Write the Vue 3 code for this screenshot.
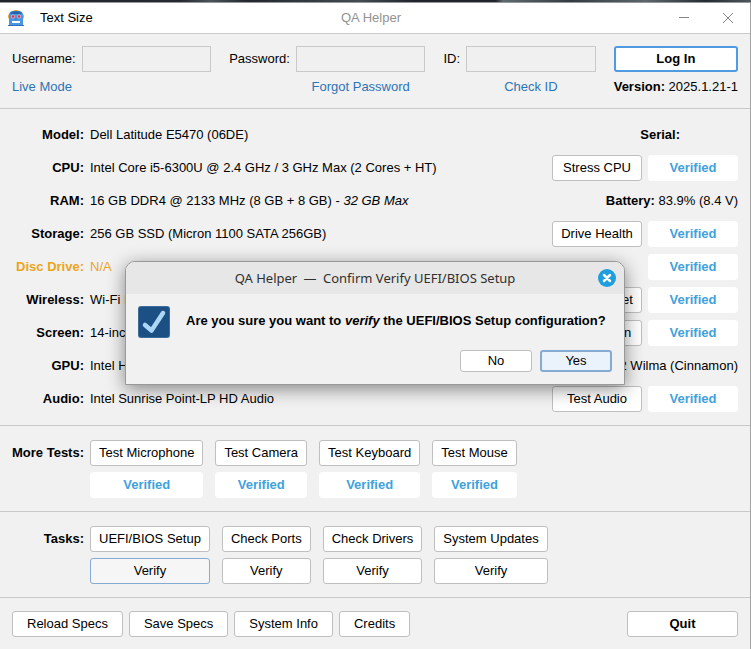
<script setup>
import { ref } from 'vue'

const username = ref('')
const password = ref('')
const deviceId = ref('')

const specs = [
  { label: 'Model', value: 'Dell Latitude E5470 (06DE)', infoLabel: 'Serial', serial: true },
  { label: 'CPU', value: 'Intel Core i5-6300U @ 2.4 GHz / 3 GHz Max (2 Cores + HT)', action: 'Stress CPU', verified: true },
  { label: 'RAM', value: '16 GB DDR4 @ 2133 MHz (8 GB + 8 GB) - ', note: '32 GB Max', infoLabel: 'Battery', info: '83.9% (8.4 V)' },
  { label: 'Storage', value: '256 GB SSD (Micron 1100 SATA 256GB)', action: 'Drive Health', verified: true },
  { label: 'Disc Drive', value: 'N/A', missing: true, verified: true },
  { label: 'Wireless', value: 'Wi-Fi Intel', action: 'Test Internet', verified: true },
  { label: 'Screen', value: '14-inch', action: 'Test Screen', verified: true },
  { label: 'GPU', value: 'Intel HD Graphics 520', infoLabel: 'OS', info: 'Linux Mint 22 Wilma (Cinnamon)' },
  { label: 'Audio', value: 'Intel Sunrise Point-LP HD Audio', action: 'Test Audio', verified: true }
]

const tests = ['Test Microphone', 'Test Camera', 'Test Keyboard', 'Test Mouse']
const tasks = ['UEFI/BIOS Setup', 'Check Ports', 'Check Drivers', 'System Updates']
const tools = ['Reload Specs', 'Save Specs', 'System Info', 'Credits']

const activeTask = ref('UEFI/BIOS Setup')
const dialogOpen = ref(true)

function verify(task) {
  activeTask.value = task
  dialogOpen.value = true
}
</script>

<template>
  <div class="desktop">
    <div class="window">
      <header class="titlebar">
        <div class="title-left">
          <svg class="robot" viewBox="0 0 16 16" aria-hidden="true">
            <rect x="0" y="4" width="16" height="5" rx="2" fill="#f0a030" />
            <path d="M3 2 Q8 -2 13 2 Z" fill="#f0a030" />
            <path d="M1 16 V4 Q2 1 5 1 H11 Q14 1 15 4 V16 Z" fill="#4a96e0" />
            <path d="M2 4 Q3 1 8 1 Q13 1 14 4 Z" fill="#2767ad" />
            <circle cx="5" cy="6.5" r="2" fill="#e6b4cb" />
            <circle cx="11" cy="6.5" r="2" fill="#e6b4cb" />
            <circle cx="5" cy="6.5" r="1.2" fill="#e02c48" />
            <circle cx="11" cy="6.5" r="1.2" fill="#e02c48" />
            <path d="M7 9.5L8 8L9 9.5Z" fill="#2767ad" />
            <rect x="4" y="11" width="8" height="2" fill="#ffffff" />
            <rect x="0" y="15" width="16" height="1" fill="#2f70b8" />
          </svg>
          <button class="menu" type="button">Text Size</button>
        </div>
        <span class="title">QA Helper</span>
        <div class="controls">
          <button type="button" aria-label="Minimize">
            <svg viewBox="0 0 12 12"><path d="M1 5.5H11" stroke="#858585" /></svg>
          </button>
          <button type="button" aria-label="Close">
            <svg viewBox="0 0 12 12"><path d="M1 1L11 11M11 1L1 11" stroke="#858585" /></svg>
          </button>
        </div>
      </header>

      <form class="login" @submit.prevent>
        <label for="username">Username:</label>
        <input id="username" v-model="username" type="text" />
        <label class="next" for="password">Password:</label>
        <input id="password" v-model="password" type="password" />
        <label class="next" for="device-id">ID:</label>
        <input id="device-id" v-model="deviceId" type="text" />
        <button class="btn primary next" type="submit">Log In</button>
        <a class="live" href="#">Live Mode</a>
        <a class="forgot" href="#">Forgot Password</a>
        <a class="check" href="#">Check ID</a>
        <span class="version next"><b>Version:</b> 2025.1.21-1</span>
      </form>

      <section class="specs">
        <div v-for="row in specs" :key="row.label" class="row" :class="{ missing: row.missing }">
          <b class="label">{{ row.label }}:</b>
          <span class="value">{{ row.value }}<i v-if="row.note">{{ row.note }}</i></span>
          <span v-if="row.infoLabel" class="info" :class="{ serial: row.serial }">
            <b>{{ row.infoLabel }}:</b> {{ row.info }}
          </span>
          <button v-if="row.action" class="btn fixed" type="button">{{ row.action }}</button>
          <button v-if="row.verified" class="btn fixed verified" type="button">Verified</button>
        </div>
      </section>

      <section class="group">
        <b class="label">More Tests:</b>
        <div v-for="test in tests" :key="test" class="pair">
          <button class="btn" type="button">{{ test }}</button>
          <button class="btn verified" type="button">Verified</button>
        </div>
      </section>

      <section class="group">
        <b class="label">Tasks:</b>
        <div v-for="task in tasks" :key="task" class="pair">
          <button class="btn" type="button">{{ task }}</button>
          <button class="btn" :class="{ active: task === activeTask }" type="button" @click="verify(task)">Verify</button>
        </div>
      </section>

      <footer class="footer">
        <button v-for="tool in tools" :key="tool" class="btn" type="button">{{ tool }}</button>
        <button class="btn quit" type="button">Quit</button>
      </footer>

      <div v-if="dialogOpen" class="dialog" role="dialog" aria-labelledby="dialog-title">
        <div class="dialog-head">
          <span id="dialog-title">QA Helper <span class="dash">—</span> Confirm Verify UEFI/BIOS Setup</span>
          <button class="dialog-close" type="button" aria-label="Close dialog" @click="dialogOpen = false">
            <svg viewBox="0 0 18 18">
              <circle cx="9" cy="9" r="9" fill="#1f9ede" />
              <path d="M6 6L12 12M12 6L6 12" stroke="#ffffff" stroke-width="2.5" stroke-linecap="round" />
            </svg>
          </button>
        </div>
        <div class="dialog-body">
          <svg class="check-icon" viewBox="0 0 32 32" aria-hidden="true">
            <rect width="32" height="32" rx="3" fill="#3c6c9a" />
            <rect x="1" y="1" width="30" height="30" rx="2" fill="#1c5085" />
            <path d="M7 19L13.5 24.5L25 7" fill="none" stroke="#add7f6" stroke-width="4.5" stroke-linecap="round" stroke-linejoin="round" />
          </svg>
          <p>Are you sure you want to <i>verify</i> the UEFI/BIOS Setup configuration?</p>
        </div>
        <div class="dialog-actions">
          <button class="btn" type="button" @click="dialogOpen = false">No</button>
          <button class="btn default" type="button" @click="dialogOpen = false">Yes</button>
        </div>
      </div>
    </div>
  </div>
</template>

<style>
body {
  margin: 0;
  background: #f1f1f1;
}
</style>

<style scoped>
* {
  box-sizing: border-box;
}

.desktop {
  min-height: 100vh;
  padding-top: 2px;
  background: linear-gradient(90deg, #20252b 0%, #252a30 24%, #4a545a 28%, #22282d 33%, #424c52 48%, #20262c 55%, #20262c 66%, #5d6a6f 67%, #333c41 76%, #5a676c 86%, #252c31 94%, #4d585d 100%);
  font: 13px/16px "Liberation Sans", Arial, sans-serif;
  color: #000000;
}

.window {
  position: relative;
  min-height: calc(100vh - 2px);
  border-top: 1px solid #979797;
  border-right: 1px solid #a3a3a3;
  background: #f1f1f1;
}

button,
input {
  font: inherit;
  color: inherit;
}

b,
.primary,
.verified,
.quit {
  font-weight: 700;
}

.titlebar {
  display: grid;
  grid-template-columns: 1fr auto 1fr;
  align-items: center;
  height: 31px;
  padding: 0 16px 0 8px;
  border-bottom: 1px solid #c9c9c9;
  background: #ffffff;
}

.title-left {
  display: flex;
  align-items: center;
  gap: 16px;
}

.robot {
  width: 16px;
  height: 16px;
}

.menu,
.controls button,
.dialog-close {
  padding: 0;
  border: 0;
  background: none;
}

.title {
  color: #929292;
}

.controls {
  display: flex;
  justify-content: flex-end;
  gap: 32px;
}

.controls svg {
  display: block;
  width: 12px;
  height: 12px;
}

.login {
  display: grid;
  grid-template-columns: auto 1fr auto 1fr auto 1fr auto;
  align-items: center;
  gap: 6px;
  padding: 12px 12px 13px;
  border-bottom: 1px solid #c9c9c9;
}

.login input {
  width: 100%;
  min-width: 0;
  height: 26px;
  border: 1px solid #c9c9c9;
  border-radius: 0;
  background: #f0f0f0;
}

.next {
  margin-left: 12px;
}

.login a,
.version {
  line-height: 17px;
}

.login a {
  color: #2e74b8;
  text-decoration: none;
}

.live {
  grid-column: 1 / 3;
}

.forgot {
  grid-column: 4;
  justify-self: center;
}

.check {
  grid-column: 6;
  justify-self: center;
}

.version {
  grid-column: 7;
}

.btn {
  height: 26px;
  padding: 0 8px;
  border: 1px solid #bfbfbf;
  border-radius: 3px;
  background: #ffffff;
  white-space: nowrap;
}

.primary {
  border: 2px solid #4e9be2;
}

.verified {
  border-color: #ffffff;
  color: #3fa2dc;
}

.active {
  border-color: #85aad3;
  background: #f6f6f6;
}

.fixed {
  width: 90px;
  padding: 0;
}

.specs {
  display: grid;
  gap: 7px;
  padding: 13px 12px;
  border-bottom: 1px solid #c9c9c9;
}

.row {
  display: flex;
  align-items: center;
  gap: 6px;
  height: 26px;
  white-space: nowrap;
}

.label {
  flex: none;
  width: 72px;
  text-align: right;
  white-space: nowrap;
}

.value {
  flex: 1;
}

.missing .label,
.missing .value {
  color: #eba51d;
}

.serial {
  padding-right: 58px;
}

.group {
  display: flex;
  gap: 12px;
  padding: 14px 12px 13px;
  border-bottom: 1px solid #c9c9c9;
}

.group .label {
  margin-right: -6px;
  line-height: 26px;
}

.pair {
  display: grid;
  gap: 6px;
}

.footer {
  display: flex;
  gap: 6px;
  padding: 13px 12px 12px;
}

.footer .btn {
  padding: 0 14px;
}

.footer .quit {
  width: 111px;
  margin-left: auto;
}

.dialog {
  position: absolute;
  top: 258px;
  left: 50%;
  transform: translateX(-50%);
  width: 500px;
  border: 1px solid #999999;
  border-radius: 10px 10px 0 0;
  background: #f1f1f1;
  box-shadow: 0 4px 18px rgba(0, 0, 0, 0.45);
}

.dialog-head {
  display: grid;
  grid-template-columns: 1fr auto 1fr;
  align-items: center;
  height: 32px;
  padding: 0 8px;
  border-radius: 9px 9px 0 0;
  background: #e7e7e7;
  font-family: "Noto Sans", "Open Sans", sans-serif;
  color: #303030;
}

#dialog-title {
  grid-column: 2;
}

.dash {
  margin: 0 3px;
}

.dialog-close {
  justify-self: end;
}

.dialog-close svg,
.check-icon {
  display: block;
}

.dialog-close svg {
  width: 18px;
  height: 18px;
}

.dialog-body {
  display: flex;
  gap: 16px;
  padding: 12px 12px 0;
}

.check-icon {
  flex: none;
  width: 32px;
  height: 32px;
}

.dialog-body p {
  margin: 0;
  padding-top: 7px;
  font-weight: 700;
  white-space: nowrap;
}

.dialog-actions {
  display: flex;
  justify-content: flex-end;
  gap: 8px;
  padding: 12px;
}

.dialog-actions .btn {
  width: 72px;
  height: 22px;
}

.dialog-actions .default {
  border: 2px solid #85aad3;
  background: #eaf2fb;
}
</style>
